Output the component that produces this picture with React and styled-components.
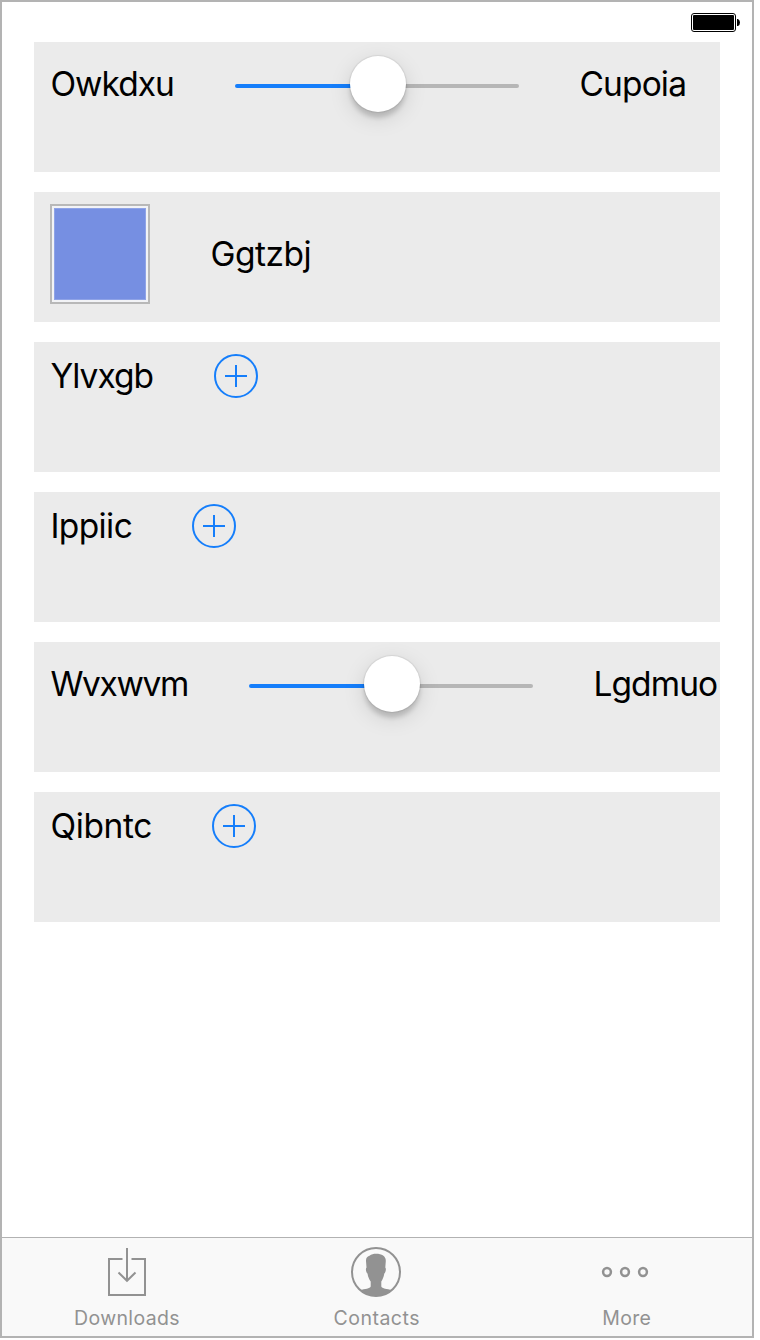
import React from "react";
import styled, { createGlobalStyle } from "styled-components";

const GlobalStyle = createGlobalStyle`
  * { box-sizing: border-box; }
  body { margin: 0; background: #fff; }
`;

const Screen = styled.div`
  width: 754px;
  height: 1338px;
  display: flex;
  flex-direction: column;
  border: 2px solid #b3b3b3;
  background: #fff;
  color: #000;
  font-family: Inter, "Liberation Sans", sans-serif;
`;

const StatusBar = styled.header`
  height: 40px;
  flex: none;
  display: flex;
  justify-content: flex-end;
  padding: 11px 12px 0 0;
`;

const List = styled.main`
  flex: 1;
  display: flex;
  flex-direction: column;
  gap: 20px;
  padding: 0 32px;
`;

const Row = styled.section`
  height: 130px;
  display: flex;
  align-items: flex-start;
  padding: 12px 0 0 16px;
  background: #ebebeb;
`;

const RowContent = styled.div`
  display: flex;
  align-items: center;
  gap: 60px;
`;

const Label = styled.span`
  flex: none;
  width: ${(p) => p.$width}px;
  padding-left: 0.4px;
  font-size: 33.5px;
  line-height: 40px;
  letter-spacing: ${(p) => p.$spacing}px;
  white-space: nowrap;
`;

const SliderBox = styled.div`
  flex: none;
  width: 284px;
  height: 60px;
  display: grid;
  align-items: center;
  position: relative;
`;

const Track = styled.div`
  height: 4px;
  margin-top: 4px;
  border-radius: 2px;
  background: linear-gradient(to right, #157efb 50%, #b6b6b6 50%);
`;

const Thumb = styled.div`
  position: absolute;
  top: 2px;
  left: 115px;
  width: 56px;
  height: 56px;
  border-radius: 50%;
  background: #fff;
  box-shadow: 0 0 1px 1px rgba(0, 0, 0, 0.07), 0 6px 4px rgba(0, 0, 0, 0.15),
    0 6px 22px rgba(0, 0, 0, 0.13);
`;

const Swatch = styled.div`
  width: 100px;
  height: 100px;
  padding: 2px;
  border: 2px solid #b8b8b8;
  background: #f2f3f6;
`;

const SwatchColor = styled.div`
  height: 100%;
  background: #768fe2;
  border: 1px solid #8fa3e7;
`;

const AddButton = styled.button`
  width: 44px;
  height: 44px;
  padding: 0;
  border: 0;
  background: none;
  color: #157efb;
  svg { display: block; }
`;

const TabBar = styled.nav`
  height: 99px;
  flex: none;
  display: grid;
  grid-template-columns: 250px 248px 252px;
  border-top: 1px solid #b2b2b2;
  background: #f9f9f9;
`;

const Tab = styled.div`
  display: flex;
  flex-direction: column;
  align-items: center;
  padding-top: 9px;
  color: #929292;
  svg { display: block; }
`;

const TabLabel = styled.span`
  margin-top: 9px;
  padding-left: ${(p) => p.$shift ?? 0}px;
  font-size: 19.5px;
  line-height: 24px;
  letter-spacing: ${(p) => p.$spacing}px;
`;

const Battery = () => (
  <svg width="49" height="19" viewBox="0 0 49 19">
    <rect x="0.5" y="0.5" width="44" height="18" rx="2.5" fill="#fff" stroke="#000" />
    <rect x="2" y="2" width="41" height="15" rx="1" />
    <path d="M46 6h1q2 1 2 3.500t-2 3.500h-1z" />
  </svg>
);

const Slider = () => (
  <SliderBox>
    <Track />
    <Thumb />
  </SliderBox>
);

const Add = () => (
  <AddButton aria-label="Add">
    <svg width="44" height="44" fill="none" stroke="currentColor" strokeWidth="2">
      <circle cx="22" cy="22" r="21" />
      <path d="M22 11v22M11 22h22" />
    </svg>
  </AddButton>
);

const DownloadIcon = () => (
  <svg width="50" height="50" fill="none" stroke="currentColor" strokeWidth="2">
    <path d="M20.500 12H7v36h36V12H29.500" />
    <path d="M25 1v32M16.500 25.500l8.500 8.300 8.500-8.300" />
  </svg>
);

const ContactIcon = () => (
  <svg width="50" height="50">
    <circle cx="25" cy="25" r="24" fill="none" stroke="currentColor" strokeWidth="2" />
    <path
      fill="currentColor"
      d="M25 6.800C31 6.800 35 9.500 34.800 14L34.300 20.500C35.500 21.500 34.700 25.500 33.300 26.500C32.800 30 31.500 32.500 30.300 34.500V39.500C31 41.500 36 42 41 43A24.500 24.500 0 0 1 9 43C14 42 19 41.500 19.700 39.500V34.500C18.300 32.500 17 30 16.500 26.500C15 25.500 14.300 21.500 15.500 20.500L15 14C14.900 11 16 9.500 18.500 8.700C20.500 7.300 22.500 6.800 25 6.800Z"
    />
  </svg>
);

const MoreIcon = () => (
  <svg width="50" height="50" fill="none" stroke="currentColor" strokeWidth="2.500">
    <circle cx="6" cy="25" r="3.900" />
    <circle cx="24" cy="25" r="3.900" />
    <circle cx="42" cy="25" r="3.900" />
  </svg>
);

export default function App() {
  return (
    <>
      <GlobalStyle />
      <Screen>
        <StatusBar><Battery /></StatusBar>
        <List>
          <Row>
            <RowContent>
              <Label $width={125} $spacing={-0.95}>Owkdxu</Label>
              <Slider />
              <Label $width={108} $spacing={-0.85}>Cupoia</Label>
            </RowContent>
          </Row>
          <Row>
            <RowContent>
              <Swatch><SwatchColor /></Swatch>
              <Label $width={102} $spacing={-0.5}>Ggtzbj</Label>
            </RowContent>
          </Row>
          <Row>
            <RowContent>
              <Label $width={104} $spacing={-0.95}>Ylvxgb</Label>
              <Add />
            </RowContent>
          </Row>
          <Row>
            <RowContent>
              <Label $width={82} $spacing={-0.6}>Ippiic</Label>
              <Add />
            </RowContent>
          </Row>
          <Row>
            <RowContent>
              <Label $width={139} $spacing={-1.35}>Wvxwvm</Label>
              <Slider />
              <Label $width={125} $spacing={-0.9}>Lgdmuo</Label>
            </RowContent>
          </Row>
          <Row>
            <RowContent>
              <Label $width={102} $spacing={-0.35}>Qibntc</Label>
              <Add />
            </RowContent>
          </Row>
        </List>
        <TabBar>
          <Tab><DownloadIcon /><TabLabel $spacing={0.35}>Downloads</TabLabel></Tab>
          <Tab><ContactIcon /><TabLabel $spacing={0.5} $shift={1.5}>Contacts</TabLabel></Tab>
          <Tab><MoreIcon /><TabLabel $spacing={0.35} $shift={1.5}>More</TabLabel></Tab>
        </TabBar>
      </Screen>
    </>
  );
}
